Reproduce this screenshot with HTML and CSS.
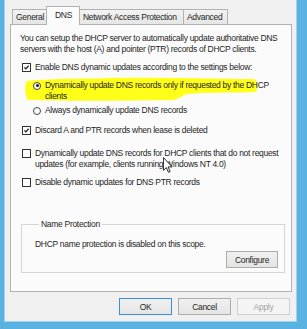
FILE: index.html
```html
<!DOCTYPE html>
<html lang="en">
<head>
    <meta charset="UTF-8">
    <meta name="viewport" content="width=device-width, initial-scale=1.0">
    <title>DNS Properties</title>
    <link rel="stylesheet" href="styles.css">
</head>
<body>
    <div class="window">
        <div class="dialog">
            <div class="tabs">
                <span class="tab tab-general">General</span>
                <span class="tab tab-dns active">DNS</span>
                <span class="tab tab-nap">Network Access Protection</span>
                <span class="tab tab-advanced">Advanced</span>
            </div>
            <div class="panel">
                <p class="intro">You can setup the DHCP server to automatically update authoritative DNS<br>servers with the host (A) and pointer (PTR) records of DHCP clients.</p>

                <div class="option check checked opt-enable">
                    <span class="box"><svg viewBox="0 0 9 9"><path d="M1.8 4.3 L3.6 6.2 L7.2 2.2"/></svg></span>
                    <span class="label">Enable DNS dynamic updates according to the settings below:</span>
                </div>

                <div class="radios">
                    <div class="option radio selected opt-requested">
                        <svg class="marker" viewBox="0 0 236 26">
                            <path d="M4 5 C30 2 70 3 84 2 C140 1 200 3 231 3 C235 5 236 13 232 16 C210 17 180 16 164 18 C158 20 156 23 150 24 C100 25 40 25 5 24 C2 20 1 9 4 5 Z"/>
                        </svg>
                        <span class="dot"></span>
                        <span class="label">Dynamically update DNS records only if requested by the DHCP<br>clients</span>
                    </div>
                    <div class="option radio opt-always">
                        <span class="dot"></span>
                        <span class="label">Always dynamically update DNS records</span>
                    </div>
                </div>

                <div class="option check checked opt-discard">
                    <span class="box"><svg viewBox="0 0 9 9"><path d="M1.8 4.3 L3.6 6.2 L7.2 2.2"/></svg></span>
                    <span class="label">Discard A and PTR records when lease is deleted</span>
                </div>

                <div class="option check opt-legacy">
                    <span class="box"></span>
                    <span class="label">Dynamically update DNS records for DHCP clients that do not request<br>updates (for example, clients running Windows NT 4.0)</span>
                    <svg class="cursor" viewBox="0 0 12 19">
                        <path d="M0.5 0.5 L0.5 16 L4 12.6 L6.6 18.3 L8.6 17.4 L6.1 11.8 L11 11.8 Z"/>
                    </svg>
                </div>

                <div class="option check opt-ptr">
                    <span class="box"></span>
                    <span class="label">Disable dynamic updates for DNS PTR records</span>
                </div>

                <fieldset class="group">
                    <legend>Name Protection</legend>
                    <p>DHCP name protection is disabled on this scope.</p>
                    <div class="group-actions">
                        <button type="button" class="btn btn-configure">Configure</button>
                    </div>
                </fieldset>
            </div>
            <div class="buttons">
                <button type="button" class="btn default">OK</button>
                <button type="button" class="btn">Cancel</button>
                <button type="button" class="btn" disabled>Apply</button>
            </div>
        </div>
    </div>
</body>
</html>
```

FILE: styles.css
```css
body {
    margin: 0;
    font-family: 'Liberation Sans', Arial, sans-serif;
    font-size: 8.5px;
    letter-spacing: -0.3px;
    color: #1e1e1e;
    background: #5ab2e2;
}

.window {
    display: flex;
    height: 329px;
    padding: 0 10px 7px 4px;
    box-sizing: border-box;
}

.dialog {
    flex: 1;
    min-width: 0;
    display: flex;
    flex-direction: column;
    background: #f0f0f0;
    border-right: 1px solid #9fd2ee;
    border-bottom: 1px solid #9fd2ee;
    border-left: 1px solid #9fd2ee;
    overflow: hidden;
}

/* tab strip */
.tabs {
    display: flex;
    align-items: flex-end;
    height: 18px;
    margin-top: 6px;
    padding-left: 7px;
    position: relative;
    z-index: 1;
}

.tab {
    height: 15px;
    line-height: 15px;
    padding: 0 3px;
    border: 1px solid #b2b2b2;
    border-bottom: none;
    border-right: none;
    background: linear-gradient(#f2f2f2, #e6e6e6);
    white-space: nowrap;
    box-sizing: border-box;
}

.tab-general { width: 34px; }
.tab-dns { width: 34px; }
.tab-nap { width: 103px; }
.tab-advanced { width: 45px; border-right: 1px solid #b2b2b2; }

.tab.active {
    height: 19px;
    line-height: 16px;
    margin-bottom: -1px;
    background: #fbfbfb;
    border-right: 1px solid #b2b2b2;
    padding-left: 8px;
}

.tab.active + .tab {
    border-left: none;
}

/* page body */
.panel {
    height: 268px;
    margin: 0 4px 0 5px;
    padding: 8px 6px 0 9px;
    border: 1px solid #b2b2b2;
    background: #fbfbfb;
    box-sizing: border-box;
    line-height: 11px;
    overflow: hidden;
}

.intro {
    margin: 0;
    white-space: nowrap;
}

.option {
    position: relative;
    display: flex;
    align-items: flex-start;
    white-space: nowrap;
}

.option .label {
    position: relative;
}

.check {
    padding-left: 2px;
}

.check .box {
    width: 9px;
    height: 9px;
    margin-top: 1px;
    margin-right: 4px;
    border: 1px solid #333;
    background: #fff;
    box-sizing: border-box;
    flex-shrink: 0;
}

.check .box svg {
    display: block;
    width: 7px;
    height: 7px;
}

.check .box path {
    fill: none;
    stroke: #1e1e1e;
    stroke-width: 1.6;
}

.radio {
    padding-left: 13px;
}

.radio .dot {
    position: relative;
    width: 8px;
    height: 8px;
    margin-top: 1.5px;
    margin-right: 4px;
    border: 1px solid #444;
    border-radius: 50%;
    background: #fff;
    box-sizing: border-box;
    flex-shrink: 0;
}

.radio.selected .dot::after {
    content: "";
    position: absolute;
    left: 1.5px;
    top: 1.5px;
    width: 3px;
    height: 3px;
    border-radius: 50%;
    background: #1e1e1e;
}

.marker {
    position: absolute;
    left: 3px;
    top: -4px;
    width: 236px;
    height: 26px;
}

.marker path {
    fill: #ffff1a;
}

.cursor {
    position: absolute;
    left: 143px;
    top: 9px;
    width: 10px;
    height: 16px;
}

.cursor path {
    fill: #fff;
    stroke: #000;
    stroke-width: 1;
    stroke-linejoin: round;
}

.opt-enable { margin-top: 7px; }
.radios { margin-top: 7px; }
.opt-always { margin-top: 3px; }
.opt-discard { margin-top: 9px; }
.opt-legacy { margin-top: 12px; }
.opt-ptr { margin-top: 7px; }

/* name protection box */
.group {
    margin: 31px 0 0 1px;
    padding: 0 6px 4px 13px;
    border: 1px solid #d5d5d5;
    min-inline-size: auto;
}

.group legend {
    padding: 0 2px;
    margin-left: 4px;
    line-height: 11px;
}

.group p {
    margin: 9px 0 0;
}

.group-actions {
    display: flex;
    justify-content: flex-end;
    margin-top: 1px;
}

.btn {
    height: 17px;
    padding: 0;
    font-family: inherit;
    font-size: 8.5px;
    letter-spacing: -0.3px;
    color: #1e1e1e;
    border: 1px solid #acacac;
    background: linear-gradient(#f0f0f0, #e5e5e5);
}

.btn-configure {
    width: 52px;
}

.buttons {
    display: flex;
    justify-content: flex-end;
    gap: 6px;
    margin-top: 6px;
    padding-right: 6px;
}

.buttons .btn {
    width: 53px;
}

.btn.default {
    border-color: #3c8ed0;
}

.btn:disabled {
    color: #a3a3a3;
    border-color: #cfcfcf;
    background: #f4f4f4;
}
```
